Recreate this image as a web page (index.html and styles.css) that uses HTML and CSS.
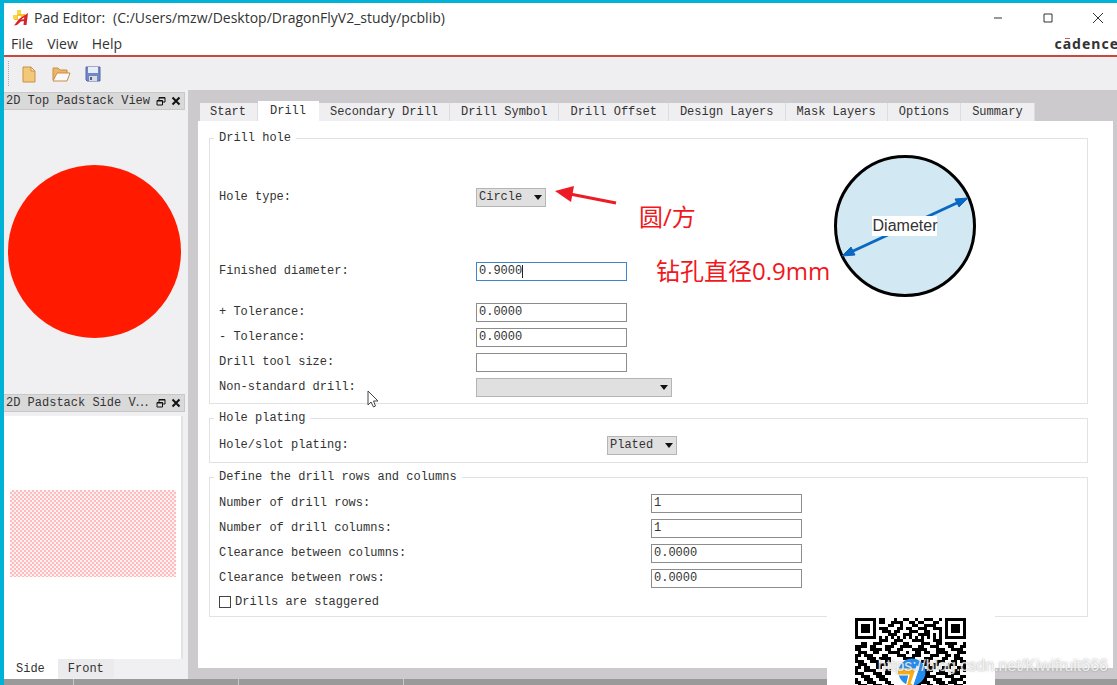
FILE: index.html
```html
<!DOCTYPE html>
<html lang="en">
<head>
<meta charset="utf-8">
<title>Pad Editor</title>
<link rel="stylesheet" href="styles.css">
</head>
<body>
<div class="window">
  <header class="titlebar">
    <svg class="app-icon" viewBox="0 0 16 16" aria-hidden="true">
      <path d="M4 0h4v4h4v4H8V6H5v4H1V5h3z" fill="#f6c526"/>
      <path d="M4 0h4v4H4zM0 5h4v4H0z" fill="#f8d648"/>
      <path d="M1 15.500 6 9l9-6-1.500 12h-3l.4-4-3 .5L4 15z" fill="#d8232a"/>
      <path d="m8 9.600 3.300-2.400-.3 2z" fill="#fff"/>
    </svg>
    <h1 class="title"><span>Pad Editor:</span><span>(C:/Users/mzw/Desktop/DragonFlyV2_study/pcblib)</span></h1>
    <div class="window-buttons">
      <button class="window-button" aria-label="Minimize"><svg viewBox="0 0 10 10"><path d="M1 5h8"/></svg></button>
      <button class="window-button" aria-label="Maximize"><svg viewBox="0 0 10 10"><path d="M1 1h8v8H1z"/></svg></button>
      <button class="window-button" aria-label="Close"><svg viewBox="0 0 10 10"><path d="m0 0 10 10M10 0 0 10"/></svg></button>
    </div>
  </header>
  <nav class="menubar">
    <button class="menu">File</button>
    <button class="menu">View</button>
    <button class="menu">Help</button>
    <span class="brand">c<span class="brand-a">a</span>dence</span>
  </nav>
  <div class="toolbar">
    <button class="tool" aria-label="New">
      <svg viewBox="0 0 20 18"><path d="M4 2h8l4 4v11H4z" fill="#f3c878" stroke="#c79343"/><path d="M12 2v4h4z" fill="#fdeecb" stroke="#c79343"/></svg>
    </button>
    <button class="tool" aria-label="Open">
      <svg viewBox="0 0 20 18"><path d="M2 15V3h5l2 2h7v4" fill="#f0b469" stroke="#c98f45"/><path d="M2 16 6 8h13l-3 8z" fill="#fafafa" stroke="#c98f45"/></svg>
    </button>
    <button class="tool" aria-label="Save">
      <svg viewBox="0 0 20 18"><path d="M3 2h14v14H4l-1-1z" fill="#7288c4" stroke="#5568a5"/><path d="M5 2h10v6H5z" fill="#e6ecfa"/><path d="M6 11h8v5H6z" fill="#d8dbe2"/><path d="M7 12h2v3H7z" fill="#4d5f98"/></svg>
    </button>
  </div>
  <div class="workspace">
    <aside class="docks">
      <section class="dock dock-top">
        <header class="dock-header">
          <h2 class="dock-title">2D Top Padstack View</h2>
          <button class="dock-button dock-float" aria-label="Float"><svg viewBox="0 0 10 10"><path d="M3 4V1.500h6V6H7M3 2h6M1 4.500h5.500V9H1zM1 5h5.500"/></svg></button>
          <button class="dock-button" aria-label="Close"><svg viewBox="0 0 10 10"><path d="m1.500 1.500 7 7M8.500 1.500l-7 7"/></svg></button>
        </header>
        <div class="top-view"><div class="pad"></div></div>
      </section>
      <section class="dock">
        <header class="dock-header">
          <h2 class="dock-title">2D Padstack Side V⋯</h2>
          <button class="dock-button dock-float" aria-label="Float"><svg viewBox="0 0 10 10"><path d="M3 4V1.500h6V6H7M3 2h6M1 4.500h5.500V9H1zM1 5h5.500"/></svg></button>
          <button class="dock-button" aria-label="Close"><svg viewBox="0 0 10 10"><path d="m1.500 1.500 7 7M8.500 1.500l-7 7"/></svg></button>
        </header>
        <div class="side-view"><div class="layer"></div></div>
        <div class="view-tabs">
          <button class="view-tab view-tab-active">Side</button>
          <button class="view-tab">Front</button>
        </div>
      </section>
    </aside>
    <main class="editor">
      <div class="tabs" role="tablist">
        <button class="tab" role="tab">Start</button>
        <button class="tab tab-active" role="tab" aria-selected="true">Drill</button>
        <button class="tab" role="tab">Secondary Drill</button>
        <button class="tab" role="tab">Drill Symbol</button>
        <button class="tab" role="tab">Drill Offset</button>
        <button class="tab" role="tab">Design Layers</button>
        <button class="tab" role="tab">Mask Layers</button>
        <button class="tab" role="tab">Options</button>
        <button class="tab" role="tab">Summary</button>
      </div>
      <form class="panel">
        <fieldset class="group">
          <legend>Drill hole</legend>
          <div class="hole">
            <div class="rows rows-hole">
              <div class="row row-type"><label for="type">Hole type:</label><span class="combo combo-small"><select id="type"><option>Circle</option></select></span></div>
              <div class="row row-diameter"><label for="diameter">Finished diameter:</label><span class="caret"><input class="field field-focus" id="diameter" value="0.9000"></span></div>
              <div class="row"><label for="plus">+ Tolerance:</label><input class="field" id="plus" value="0.0000"></div>
              <div class="row"><label for="minus">- Tolerance:</label><input class="field" id="minus" value="0.0000"></div>
              <div class="row"><label for="tool">Drill tool size:</label><input class="field" id="tool"></div>
              <div class="row"><label for="nonstandard">Non-standard drill:</label><span class="combo combo-wide"><select id="nonstandard"><option></option></select></span></div>
            </div>
            <svg class="diagram" viewBox="0 0 144 144" role="img" aria-label="Hole diameter">
              <circle cx="72" cy="72" r="69.500" fill="#d2e8f2" stroke="#000" stroke-width="3"/>
              <path d="M18 98 126 48" stroke="#0a67c2" stroke-width="3"/>
              <path d="m9 102 9-9 4 8zM135 44l-13 1 4 8z" fill="#0a67c2" stroke="#0a67c2"/>
              <path d="M39 62h65v20H39z" fill="#fff"/>
              <text class="diagram-text" x="72" y="77" text-anchor="middle">Diameter</text>
            </svg>
          </div>
        </fieldset>
        <fieldset class="group">
          <legend>Hole plating</legend>
          <div class="rows rows-plating">
            <div class="row"><label for="plating">Hole/slot plating:</label><span class="combo combo-small"><select id="plating"><option>Plated</option></select></span></div>
          </div>
        </fieldset>
        <fieldset class="group">
          <legend>Define the drill rows and columns</legend>
          <div class="rows rows-array">
            <div class="row"><label for="nrows">Number of drill rows:</label><input class="field" id="nrows" value="1"></div>
            <div class="row"><label for="ncols">Number of drill columns:</label><input class="field" id="ncols" value="1"></div>
            <div class="row"><label for="ccols">Clearance between columns:</label><input class="field" id="ccols" value="0.0000"></div>
            <div class="row"><label for="crows">Clearance between rows:</label><input class="field" id="crows" value="0.0000"></div>
            <div class="check-row"><input class="check" type="checkbox" id="staggered"><label for="staggered">Drills are staggered</label></div>
          </div>
        </fieldset>
      </form>
      <svg class="note-arrow" viewBox="0 0 64 22" aria-hidden="true"><path d="m1 6 19-5-3 16z" fill="#ed1c24"/><path d="m16 9 46 9" stroke="#ed1c24" stroke-width="3"/></svg>
      <p class="note note-shape">圆/方</p>
      <p class="note note-diameter">钻孔直径0.9mm</p>
      <svg class="pointer" viewBox="0 0 12 18" aria-hidden="true"><path d="M1 1v14l3-3 2.500 5 2-1L6.500 11H11z" fill="#fff" stroke="#444"/></svg>
    </main>
  </div>
  <footer class="statusbar"><span></span><span></span><span></span></footer>
</div>
<div class="qr-card">
  <svg class="qr" id="qr" viewBox="0 0 37 37" role="img" aria-label="QR code"></svg>
</div>
<p class="watermark">https://blog.csdn.net/Kiwifruit666</p>
<script src="qr.js"></script>
</body>
</html>
```
FILE: styles.css
```css
* { box-sizing: border-box; }

body {
  margin: 0;
  height: 100vh;
  overflow: hidden;
  background: #00b3d6;
  color: #333;
  font: 12px/16px "Liberation Mono", "Noto Sans CJK SC", monospace;
}

button, input, select { font: inherit; color: inherit; }
button { margin: 0; padding: 0; border: 0; background: none; }
svg { display: block; }

.window {
  display: flex;
  flex-direction: column;
  height: 100vh;
  padding: 3px 0 0 4px;
}

.titlebar {
  display: flex;
  align-items: center;
  gap: 5px;
  height: 29px;
  padding-left: 9px;
  background: #fff;
  font-family: "Open Sans", sans-serif;
}
.app-icon { width: 16px; height: 16px; }
.title {
  display: flex;
  flex: 1;
  gap: 8px;
  margin: 0;
  font-size: 14px;
  font-weight: 400;
}
.window-buttons {
  display: flex;
  margin-right: -6px;
}
.window-button {
  display: flex;
  justify-content: center;
  width: 50px;
}
.window-button svg {
  width: 10px;
  height: 10px;
  fill: none;
  stroke: #333;
}

.menubar {
  display: flex;
  align-items: center;
  gap: 14px;
  height: 23px;
  padding-left: 7px;
  background: #fff;
  font-family: "Open Sans", sans-serif;
  font-size: 14px;
}
.brand {
  margin-left: auto;
  margin-right: -2px;
  font: 700 14px/16px "Noto Sans", sans-serif;
  letter-spacing: 1px;
}
.brand-a {
  display: inline-block;
  background: linear-gradient(#d9534a, #d9534a) center 2px / 5px 1px no-repeat;
}

.toolbar {
  position: relative;
  display: flex;
  align-items: center;
  gap: 12px;
  height: 35px;
  padding-left: 15px;
  border-top: 2px solid #c8473f;
  background: #efeef0;
}
.toolbar::before {
  content: "";
  position: absolute;
  left: 4px;
  top: 4px;
  bottom: 4px;
  border-left: 1px dotted #aaa;
}
.tool svg { width: 20px; height: 18px; }

.workspace {
  display: flex;
  flex: 1;
  min-height: 0;
  gap: 10px;
  background: #cccacc;
}

.docks {
  display: flex;
  flex-direction: column;
  width: 184px;
  padding-top: 2px;
  background: #f0eff1;
}
.dock {
  display: flex;
  flex: 1;
  flex-direction: column;
}
.dock-top { flex: none; height: 302px; }
.dock-header {
  display: flex;
  align-items: center;
  gap: 5px;
  height: 18px;
  margin-right: 3px;
  padding: 0 3px 0 2px;
  border: solid #c9c8c9;
  border-width: 1px 1px 1px 0;
  background: #dad9da;
}
.dock-title {
  flex: 1;
  margin: 0;
  font-size: 12px;
  font-weight: 400;
  white-space: nowrap;
}
.dock-button svg {
  width: 10px;
  height: 10px;
  fill: none;
  stroke: #111;
  stroke-width: 2;
}
.dock-float svg { stroke-width: 1; }
.top-view {
  display: flex;
  flex: 1;
  align-items: center;
  padding: 0 0 2px 4px;
}
.pad {
  width: 173px;
  aspect-ratio: 1;
  border-radius: 50%;
  background: #ff1a00;
}
.side-view {
  flex: 1;
  margin: 4px 5px 0 0;
  padding: 74px 5px 0 6px;
  border-right: 2px solid #e3e2e4;
  background: #fff;
}
.layer {
  height: 87px;
  background: conic-gradient(#ffbcbc 25%, #fff1f1 0 50%, #ffbcbc 0 75%, #fff1f1 0) 0 0 / 4px 4px;
}
.view-tabs {
  display: flex;
  height: 20px;
}
.view-tab {
  padding: 0 10px;
  height: 19px;
  background: #ebeaec;
}
.view-tab-active {
  padding: 0 13px 0 12px;
  height: 20px;
  background: #fff;
}

.editor {
  position: relative;
  display: flex;
  flex: 1;
  flex-direction: column;
  padding: 11px 4px 11px 0;
  min-width: 0;
}
.tabs {
  display: flex;
  align-items: flex-end;
  height: 20px;
  padding-left: 2px;
}
.tab {
  height: 18px;
  padding: 0 11px 0 10px;
  border-right: 1px solid #dddcde;
  background: #efeef0;
  white-space: nowrap;
}
.tab + .tab { padding-left: 11px; }
.tab + .tab-active {
  height: 20px;
  padding: 0 13px 0 12px;
  border-right: 0;
  background: #fff;
}
.panel {
  display: flex;
  flex: 1;
  flex-direction: column;
  gap: 6px;
  padding: 9px 25px 0 11px;
  background: #fff;
}

.group {
  min-width: 0;
  margin: 0;
  padding: 0;
  border: 1px solid #e2e2e2;
}
.group legend {
  margin-left: 4px;
  padding: 0 5px;
  height: 16px;
}
.hole {
  display: flex;
  justify-content: space-between;
}
.rows {
  display: flex;
  flex-direction: column;
  gap: 5px;
  padding-left: 9px;
}
.row {
  display: grid;
  align-items: center;
  height: 20px;
}
.rows-hole { padding-top: 41px; padding-bottom: 6px; }
.rows-hole .row { grid-template-columns: 257px auto; justify-content: start; }
.rows-plating { padding-top: 9px; padding-bottom: 7px; }
.rows-plating .row { grid-template-columns: 388px auto; justify-content: start; }
.rows-array { padding-top: 8px; padding-bottom: 5px; }
.rows-array .row { grid-template-columns: 432px auto; justify-content: start; }
.row-type { margin-bottom: 49px; }
.row-diameter { margin-bottom: 16px; }

.field {
  display: block;
  width: 151px;
  height: 19px;
  padding: 0 2px;
  border: 1px solid #8d8d8d;
  border-radius: 0;
  background: #fff;
  outline: 0;
}
.field-focus { border-color: #3b86d0; }
.caret { position: relative; }
.caret::after {
  content: "";
  position: absolute;
  left: 46px;
  top: 3px;
  width: 1px;
  height: 13px;
  background: #222;
}

.combo { position: relative; }
.combo select {
  display: block;
  width: 100%;
  height: 19px;
  padding: 0 2px;
  border: 1px solid #b5b5b5;
  border-radius: 0;
  background: #e1e0e1;
  appearance: none;
}
.combo::after {
  content: "";
  position: absolute;
  right: 4px;
  top: 7px;
  border: 4px solid transparent;
  border-top: 5px solid #111;
  border-bottom: 0;
  pointer-events: none;
}
.combo-small { width: 70px; }
.combo-wide { width: 196px; }

.check-row {
  display: flex;
  align-items: center;
  gap: 4px;
  height: 18px;
}
.check {
  width: 12px;
  height: 12px;
  margin: 0;
  border: 1px solid #444;
  background: #fff;
  appearance: none;
}

.diagram {
  width: 144px;
  height: 144px;
  margin: 8px 110px 0 0;
}
.diagram-text {
  font: 16px "Liberation Sans", sans-serif;
  fill: #333;
}

.note {
  position: absolute;
  margin: 0;
  color: #f01820;
  font: 24px/32px "Open Sans", "Noto Sans CJK SC", sans-serif;
  white-space: nowrap;
}
.note-shape { left: 441px; top: 111px; }
.note-diameter { left: 458px; top: 165px; }
.note-arrow {
  position: absolute;
  left: 356px;
  top: 95px;
  width: 64px;
  height: 22px;
}
.pointer {
  position: absolute;
  left: 169px;
  top: 300px;
  width: 12px;
  height: 18px;
}

.statusbar {
  display: flex;
  height: 6px;
  background: #9b9a9b;
}
.statusbar span {
  width: 165px;
  border-right: 1px solid #c8c8c8;
}
.statusbar span:first-child { width: 70px; }

.qr-card {
  position: absolute;
  right: 122px;
  bottom: 0;
  width: 168px;
  height: 69px;
  padding: 2px 28px 0;
  overflow: hidden;
  background: #fff;
}
.qr { width: 111px; height: 111px; }

.watermark {
  position: absolute;
  right: 9px;
  bottom: 9px;
  margin: 0;
  color: rgba(255, 255, 255, 0.8);
  font: 16px/20px "Liberation Sans", sans-serif;
  text-shadow: 0 0 2px rgba(120, 120, 120, 0.7);
}
```
FILE: qr.js
```js
const rows = [
  "1111111011000100110010011100101111111",
  "1000001011001111001101100011001000001",
  "1011101000011001000110011110001011101",
  "1011101011100011011001110011101011101",
  "1011101001110110001110011000101011101",
  "1000001000011100111001111010101000001",
  "1111111010101010101010101010101111111",
  "0000000011100111000111100011100000000",
  "0011001110001100110000111001101111001",
  "1111011000111001111001100111000110011",
  "1100011110110011000111110001110011110",
  "0111001100011110010011011001111000111",
  "1101110001100011100111000111001101100",
  "1000111011110000111100011100011001110",
  "1110011100110000000000111001110011011",
  "0111000111100000000000011011000111001",
  "1101100110000000000000001110011100111",
  "1001111000110000000000011100110001101",
  "1110001110110000000000011001111011100",
  "0011100111000000000000011110001110011",
  "1001110011100000000000110011100011110",
  "1100111000110000000001111001110111001",
  "0111001110011000000111001100111001110"
];

let modules = "";
rows.forEach((row, y) => {
  [...row].forEach((cell, x) => {
    if (cell === "1") modules += `M${x} ${y}h1v1h-1z`;
  });
});

document.getElementById("qr").innerHTML =
  `<path d="${modules}" fill="#000" shape-rendering="crispEdges"/>
   <circle cx="19" cy="18" r="4.500" fill="#238df0"/>
   <path d="M14 17h7l-2 6h-2l1-4h-4z" fill="#f9ad1a" stroke="#fff" stroke-width=".4"/>
   <path d="m21 16-2 6" stroke="#fff" stroke-width="1"/>`;
```
